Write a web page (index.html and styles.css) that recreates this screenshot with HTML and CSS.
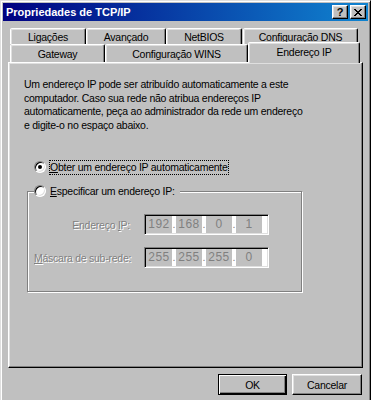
FILE: index.html
```html
<!doctype html>
<html>
<head>
    <meta charset="utf-8" />
    <title>Propriedades de TCP/IP</title>
    <link rel="stylesheet" href="styles.css">
</head>

<body>
    <div class="window">
        <div class="titlebar">
            <span class="title">Propriedades de TCP/IP</span>
            <div class="caption-btns">
                <span class="cap-btn help">?</span>
                <span class="cap-btn close">
                    <svg width="8" height="7" viewBox="0 0 8 7" shape-rendering="crispEdges">
                        <path fill="#000" d="M0 0h2v1H0zM6 0h2v1H6zM1 1h2v1H1zM5 1h2v1H5zM2 2h4v1H2zM3 3h2v1H3zM2 4h4v1H2zM1 5h2v1H1zM5 5h2v1H5zM0 6h2v1H0zM6 6h2v1H6z"/>
                    </svg>
                </span>
            </div>
        </div>

        <div class="sheet">
            <div class="tab-row back">
                <div class="tab lig">Ligações</div>
                <div class="tab ava">Avançado</div>
                <div class="tab net">NetBIOS</div>
                <div class="tab dns">Configuração DNS</div>
            </div>
            <div class="tab-row front">
                <div class="tab gw">Gateway</div>
                <div class="tab wins">Configuração WINS</div>
                <div class="tab ip active">Endereço IP</div>
            </div>

            <div class="panel">
                <p class="intro">
                    Um endereço IP pode ser atribuído automaticamente a este<br>
                    computador. Caso sua rede não atribua endereços IP<br>
                    automaticamente, peça ao administrador da rede um endereço<br>
                    e digite-o no espaço abaixo.
                </p>

                <div class="radio-line">
                    <span class="radio checked"></span>
                    <span class="focus"><u>O</u>bter um endereço IP automaticamente</span>
                </div>

                <fieldset class="group">
                    <legend>
                        <span class="radio"></span>
                        <span><u>E</u>specificar um endereço IP:</span>
                    </legend>
                    <div class="ip-grid">
                        <label class="dis">Endereço <u>I</u>P:</label>
                        <div class="ipbox">
                            <span class="oct">192</span><span class="dot">.</span><span class="oct">168</span><span class="dot">.</span><span class="oct">0</span><span class="dot">.</span><span class="oct">1</span>
                        </div>
                        <label class="dis"><u>M</u>áscara de sub-rede:</label>
                        <div class="ipbox">
                            <span class="oct">255</span><span class="dot">.</span><span class="oct">255</span><span class="dot">.</span><span class="oct">255</span><span class="dot">.</span><span class="oct">0</span>
                        </div>
                    </div>
                </fieldset>
            </div>
        </div>

        <div class="buttons">
            <span class="btn default">OK</span>
            <span class="btn cancel">Cancelar</span>
        </div>
    </div>
</body>

</html>
```

FILE: styles.css
```css
:root {
    --face: #c0c0c0;
    --light: #dfdfdf;
    --shadow: #808080;
}
* {
    box-sizing: border-box;
}
html, body {
    margin: 0;
    background-color: var(--face);
    overflow: hidden;
}
body {
    font-family: "Liberation Sans", Arial, sans-serif;
    font-size: 10.5px;
    letter-spacing: -0.25px;
    color: #000;
}

.window {
    width: 371px;
    height: 404px;
    padding: 2px;
    border: 1px solid;
    border-color: var(--light) #000 #000 var(--light);
    box-shadow: inset 1px 1px #fff, inset -1px -1px var(--shadow);
}

/* caption */
.titlebar {
    height: 18px;
    padding: 0 2px 0 3px;
    display: flex;
    align-items: center;
    justify-content: space-between;
    background: linear-gradient(to right, #000080, #1084d0);
    color: #fff;
    font-size: 11px;
    font-weight: bold;
    letter-spacing: 0;
}
.caption-btns {
    display: flex;
    gap: 2px;
}
    .cap-btn {
        width: 16px;
        height: 14px;
        display: flex;
        align-items: center;
        justify-content: center;
        background: var(--face);
        color: #000;
        border: 1px solid;
        border-color: #fff #000 #000 #fff;
        box-shadow: inset -1px -1px var(--shadow), inset 1px 1px var(--light);
        font-size: 11px;
        line-height: 12px;
    }

/* tabs */
.sheet {
    margin: 7px 5px 0;
}
.tab-row {
    display: flex;
    padding-left: 2px;
}
    .tab-row.back {
        height: 16px;
    }
    .tab-row.front {
        height: 18px;
        align-items: flex-end;
    }
        .tab {
            height: 100%;
            display: flex;
            align-items: center;
            justify-content: center;
            border: 1px solid;
            border-bottom: none;
            border-color: #fff #000 transparent #fff;
            border-radius: 2px 2px 0 0;
            box-shadow: inset -1px 0 var(--shadow), inset 1px 1px var(--light);
            background: var(--face);
        }
        .tab.lig { width: 76px; }
        .tab.ava { width: 80px; }
        .tab.net { width: 76px; }
        .tab.dns { width: 115px; margin-left: 1px; }
        .tab.gw { width: 95px; }
        .tab.wins { width: 143px; }
        .tab.active {
            width: 112px;
            height: 21px;
            margin-bottom: -1px;
            padding-bottom: 3px;
            position: relative;
            z-index: 1;
        }

.panel {
    height: 306px;
    padding-left: 15px;
    border: 1px solid;
    border-color: #fff #000 #000 #fff;
    box-shadow: inset -1px -1px var(--shadow), inset 1px 1px var(--light);
}
.intro {
    margin: 15px 0 0;
    line-height: 13.5px;
}

/* radios */
.radio {
    width: 12px;
    height: 12px;
    flex: none;
    border-radius: 50%;
    background: #fff;
    border: 1px solid;
    border-color: var(--shadow) #fff #fff var(--shadow);
    box-shadow: inset 1px 1px #000, inset -1px -1px var(--light);
    display: flex;
    align-items: center;
    justify-content: center;
}
.radio.checked::after {
    content: "";
    width: 4px;
    height: 4px;
    border-radius: 50%;
    background: #000;
}
.radio-line {
    height: 16px;
    margin: 27px 0 0 10px;
    display: flex;
    align-items: center;
    gap: 3px;
}
.focus {
    padding: 1px 1px;
    line-height: 13px;
    outline: 1px dotted #000;
    outline-offset: -1px;
}

/* group box */
.group {
    width: 275px;
    margin: 8px 0 0 3px;
    padding: 0 0 23px 6px;
    border: 1px solid var(--shadow);
    box-shadow: inset 1px 1px #fff, 1px 1px #fff;
}
.group legend {
    height: 16px;
    padding: 0 5px 0 0;
    display: flex;
    align-items: center;
    gap: 4px;
    background: var(--face);
}
.ip-grid {
    margin-top: 15px;
    display: grid;
    grid-template-columns: 96px 125px;
    column-gap: 14px;
    row-gap: 12px;
    align-items: center;
}
.dis {
    text-align: right;
    white-space: nowrap;
    color: var(--shadow);
    text-shadow: 1px 1px #fff;
}
.ipbox {
    height: 21px;
    padding: 0 2px 0 1px;
    display: flex;
    background: #fff;
    border: 1px solid;
    border-color: var(--shadow) #fff #fff var(--shadow);
    box-shadow: inset 1px 1px #000, inset -1px -1px var(--light);
    letter-spacing: 0.5px;
}
    .ipbox .oct {
        width: 26px;
        margin: 1px 0;
        background: var(--face);
        color: var(--shadow);
        text-align: center;
        line-height: 17px;
        font-size: 12px;
    }
    .ipbox .dot {
        width: 4px;
        color: var(--shadow);
        line-height: 19px;
        text-align: center;
        letter-spacing: 0;
    }

/* dialog buttons */
.buttons {
    margin-top: 6px;
    padding-right: 6px;
    display: flex;
    justify-content: flex-end;
    gap: 5px;
}
.btn {
    height: 21px;
    display: flex;
    align-items: center;
    justify-content: center;
    border: 1px solid;
    border-color: #fff #000 #000 #fff;
    box-shadow: inset -1px -1px var(--shadow), inset 1px 1px var(--light);
}
.btn.default {
    width: 69px;
    border-color: #000;
    box-shadow: inset 1px 1px #fff, inset -1px -1px #000, inset -2px -2px var(--shadow);
}
.btn.cancel {
    width: 70px;
}
```
